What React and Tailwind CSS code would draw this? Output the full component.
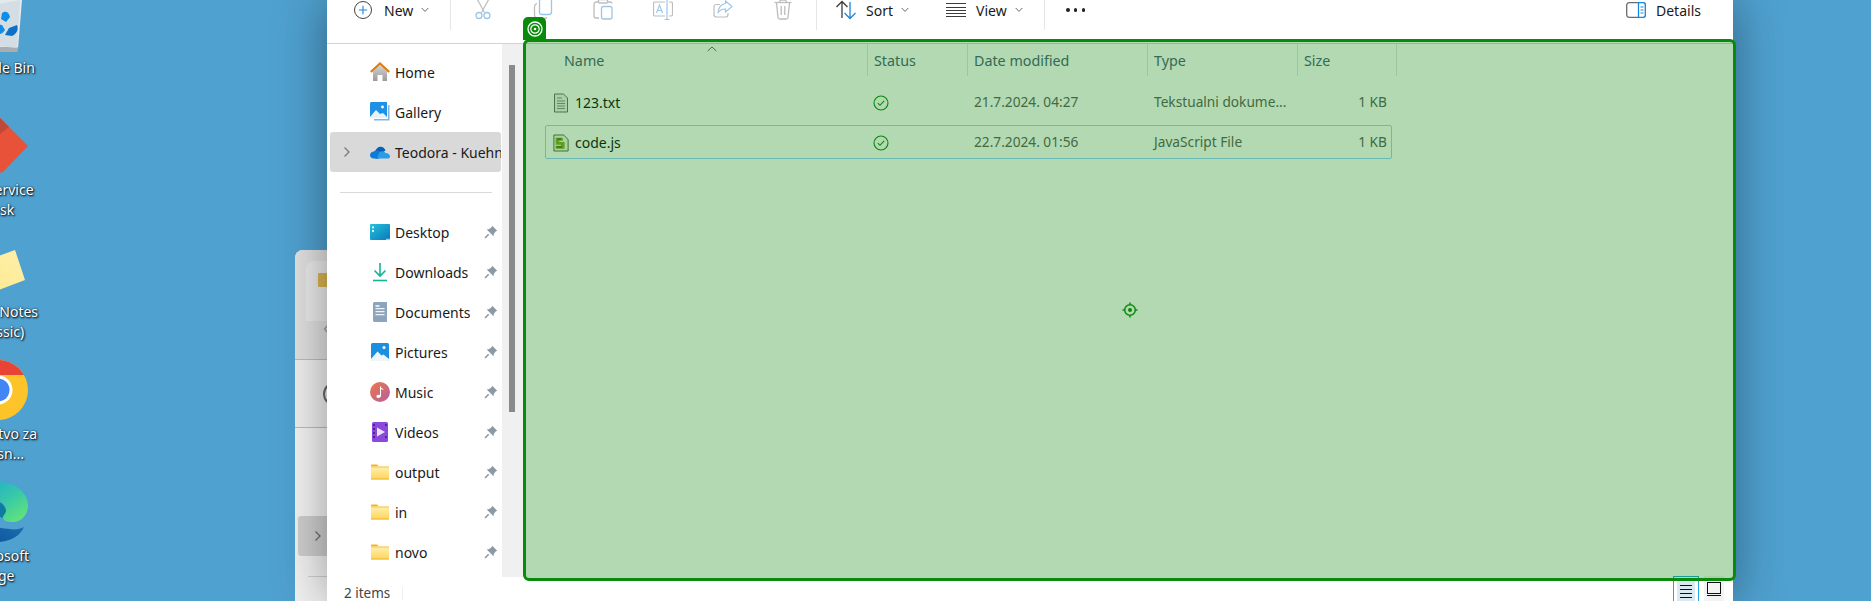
import React from "react";

const Chevron = ({ cls = "text-[#6a6a6a]" }) => (
  <svg width="8" height="6" viewBox="0 0 8 6" className={cls}><path d="M.7 1 4 4.4 7.3 1" fill="none" stroke="currentColor" strokeWidth="1" /></svg>
);

const Bin = () => (
  <svg width="60" height="60" viewBox="0 0 60 60">
    <path d="M12 6H54L50 55H16Z" fill="#e3eaee" />
    <path d="M16 55H50L49.5 60H17Z" fill="#a9aeb2" transform="translate(0 -2)" />
    <path d="M30 10 52 6l-3 48-20-2z" fill="#d4dde3" />
    <path d="M34 19c5-3 7 0 8 4l-4 5-5-3zM28 30l6 1 3 5c-2 4-8 6-11 3s-1-6 2-9z" fill="#0f8de8" />
    <path d="M41 34l8-3c2 5-1 9-5 11l-7-1z" fill="#0c72c8" />
  </svg>
);

const Diamond = () => (
  <svg width="60" height="60" viewBox="0 0 60 60">
    <path d="M32 2 60 30 36 55c-2 2-5 2-7 0L6 32c-2-2-2-5 0-7L26 3c2-2 4-2 6-1z" fill="#e85239" />
    <path d="M32 2 41 11 30 20 22 15 26 3c2-2 4-2 6-1z" fill="#c04a36" />
  </svg>
);

const Note = () => (
  <svg width="60" height="60" viewBox="0 0 60 60">
    <defs><linearGradient id="nt" x1="0" y1="1" x2="1" y2="0"><stop offset="0" stopColor="#ffe88a" /><stop offset="1" stopColor="#fdf0ab" /></linearGradient></defs>
    <path d="M8 26 47 12 57 42 20 56Z" fill="url(#nt)" />
    <path d="M8 26 30 18 32 14 20 14Z" fill="#a9d9d0" />
  </svg>
);

const Chrome = () => (
  <svg width="60" height="60" viewBox="0 0 60 60">
    <defs><clipPath id="cc"><circle cx="30" cy="30" r="30" /></clipPath></defs>
    <g clipPath="url(#cc)">
      <rect width="60" height="60" fill="#fdc42a" />
      <path d="M0 0H60V15H30L8 34 0 30Z" fill="#e94335" />
      <path d="M0 30 17 36 30 40 27 60H0Z" fill="#2f9e4f" />
    </g>
    <circle cx="30" cy="30" r="14.5" fill="#fff" />
    <circle cx="30" cy="30" r="11.5" fill="#4285f4" />
  </svg>
);

const Edge = () => (
  <svg width="60" height="60" viewBox="0 0 60 60">
    <defs>
      <linearGradient id="eg" x1="0" y1="0" x2="1" y2="1"><stop offset="0" stopColor="#1ba3d8" /><stop offset=".55" stopColor="#38c9a8" /><stop offset="1" stopColor="#6dea6f" /></linearGradient>
      <linearGradient id="eb" x1="1" y1="0" x2="0" y2="1"><stop offset="0" stopColor="#1f79b5" /><stop offset="1" stopColor="#0c4b9a" /></linearGradient>
    </defs>
    <path d="M3 28C5 10 18 0 32 0c16 0 28 12 28 23 0 10-7 17-15 17-6 0-9-1-10-4-1-2 3-4 3-8 0-6-6-11-14-9C15 21 8 23 3 28z" fill="url(#eg)" />
    <path d="M20 20c9-3 16 1 18 8 0 4-4 6-3 8l-9-3-5-6z" fill="#0e7c9f" />
    <path d="M0 32c0 16 13 28 29 28 13 0 23-6 27-15-4 2-9 3-14 2-12 0-20-4-24-12C14 31 6 29 0 32z" fill="url(#eb)" />
  </svg>
);

const desktopItems = [
  { icon: <Bin />, text: "Recycle Bin" },
  { icon: <Diamond />, text: "Jira Service Desk" },
  { icon: <Note />, text: "Sticky Notes (Classic)" },
  { icon: <Chrome />, text: "Uputstvo za korisn..." },
  { icon: <Edge />, text: "Microsoft Edge" },
];

const Home = () => (
  <svg width="20" height="20" viewBox="0 0 20 20">
    <defs><linearGradient id="hm" x1="0" y1="0" x2="0" y2="1"><stop offset="0" stopColor="#d5d5d5" /><stop offset="1" stopColor="#9a9a9a" /></linearGradient></defs>
    <path d="M3 9 10 3l7 6v10h-4.500v-6h-5v6H3z" fill="url(#hm)" />
    <path d="M.7 10 10 1.500l9.300 8.500" fill="none" stroke="#e07b10" strokeWidth="2.200" />
  </svg>
);
const Gallery = () => (
  <svg width="20" height="20" viewBox="0 0 20 20">
    <path d="M18 3h1.500v15.500H4V17h14z" fill="#7fb5e0" />
    <path d="M0 1.500C0 .7.700 0 1.500 0H17v15H0z" fill="#1d92e4" />
    <circle cx="12.500" cy="5" r="1.400" fill="#fff" />
    <path d="M0 15 6 8l4 4 3-1 4 4v1H0z" fill="#e8f2fb" />
  </svg>
);
const OneDrive = () => (
  <svg width="20" height="14" viewBox="0 0 20 14">
    <path d="M5 7c1-4 4-6 7-5 2 .5 3 2 3.500 3.500L10 9z" fill="#0a5fb8" />
    <path d="M4 13.500C1.500 13.500 0 12 0 10c0-2 2-3.500 4-3.500.500-1 3-1.500 5-.500l3 3 2-1 2 1-8 5z" fill="#0f7bd6" />
    <path d="M7 13.500h11c1.500 0 2-1 2-2 0-2-2-3.500-4.500-3.500-1-1-3-2.500-6-1z" fill="#2a9ce8" />
  </svg>
);
const DesktopI = () => (
  <svg width="20" height="20" viewBox="0 0 20 20">
    <defs><linearGradient id="dk" x1="0" y1="0" x2="1" y2="1"><stop offset="0" stopColor="#22c3dd" /><stop offset="1" stopColor="#0c78b8" /></linearGradient></defs>
    <rect y="2" width="20" height="16" rx="1" fill="url(#dk)" />
    <rect x="2" y="4.500" width="2" height="1.800" fill="#fff" />
    <rect x="2" y="8" width="2" height="1.800" fill="#fff" />
    <rect x="16" y="16.800" width="4" height="1" fill="#cde" />
  </svg>
);
const DownloadI = () => (
  <svg width="20" height="20" viewBox="0 0 20 20" fill="none" stroke="#14b39a" strokeWidth="1.600">
    <path d="M10 1v12.500M4.500 8.500 10 14l5.500-5.500" />
    <path d="M3 18.500h14" />
  </svg>
);
const DocumentI = () => (
  <svg width="20" height="20" viewBox="0 0 20 20">
    <path d="M3 1.500c0-.8.700-1.500 1.500-1.500H17v20H4.500C3.700 20 3 19.300 3 18.500z" fill="#8ea4bd" />
    <path d="M5.500 6h9v1.200h-9zM5.500 9h9v1.200h-9zM5.500 12h9v1.200h-9z" fill="#eef3f8" />
    <rect x="5.500" y="3" width="4" height="2" fill="#dfe7f0" />
  </svg>
);
const PicturesI = () => (
  <svg width="20" height="20" viewBox="0 0 20 20">
    <rect x="1" y="1" width="18" height="18" rx="1.500" fill="#1c8fe0" />
    <circle cx="14" cy="5.500" r="1.500" fill="#fff" />
    <path d="M1 17 7.500 9.500l4 4 2-1L19 17v1c0 .6-.4 1-1 1H2c-.6 0-1-.4-1-1z" fill="#eef6fc" />
  </svg>
);
const MusicI = () => (
  <svg width="20" height="20" viewBox="0 0 20 20">
    <defs><linearGradient id="ms" x1="0" y1="0" x2="1" y2="1"><stop offset="0" stopColor="#f0774a" /><stop offset="1" stopColor="#b1609e" /></linearGradient></defs>
    <circle cx="10" cy="10" r="10" fill="url(#ms)" />
    <path d="M10 4.500h1v1c0 1 2.500 1 2.500 2.500l-2.500-1v6.500c0 1.500-1.200 2.500-2.500 2.500S6 15 6.500 14c.5-1.200 2-1.500 3.500-1z" fill="#fff" />
  </svg>
);
const VideosI = () => (
  <svg width="20" height="20" viewBox="0 0 20 20">
    <rect x="2" y="0" width="16" height="20" rx="1.500" fill="#8a48dc" />
    <path d="M7 5.500 15 10l-8 4.500z" fill="#ece0fb" />
    <path d="M3.300 2h1.500v2H3.300zM3.300 6h1.500v2H3.300zM3.300 10h1.500v2H3.300zM3.300 14h1.500v2H3.300zM15.200 2h1.500v2h-1.500zM15.200 14h1.500v2h-1.500z" fill="#3c1d80" />
  </svg>
);
const FolderI = () => (
  <svg width="20" height="20" viewBox="0 0 20 20">
    <defs><linearGradient id="fd" x1="0" y1="0" x2="0" y2="1"><stop offset="0" stopColor="#fff0b0" /><stop offset="1" stopColor="#fdd45a" /></linearGradient></defs>
    <path d="M1 3.500C1 3 1.400 2.500 2 2.500h5l2 2H1z" fill="#f5b21d" />
    <rect x="1" y="4.500" width="18" height="13" fill="url(#fd)" />
    <rect x="1" y="16.500" width="18" height="1" fill="#f2b733" />
    <rect x="1" y="4.500" width="18" height="1" fill="#f5c344" />
  </svg>
);
const Pin = () => (
  <svg width="14" height="14" viewBox="0 0 14 14">
    <path d="M8.300.8 13.200 5.700 11.700 6.500 9.900 8.700 9.500 11.300 2.700 4.500 5.300 4.100 7.500 2.300z" fill="#8d9aa5" />
    <path d="M4.700 9.300 1 13" stroke="#8d9aa5" strokeWidth="1.600" />
  </svg>
);

const navTop = [
  { icon: <Home />, text: "Home" },
  { icon: <Gallery />, text: "Gallery" },
];
const navPinned = [
  { icon: <DesktopI />, text: "Desktop" },
  { icon: <DownloadI />, text: "Downloads" },
  { icon: <DocumentI />, text: "Documents" },
  { icon: <PicturesI />, text: "Pictures" },
  { icon: <MusicI />, text: "Music" },
  { icon: <VideosI />, text: "Videos" },
  { icon: <FolderI />, text: "output" },
  { icon: <FolderI />, text: "in" },
  { icon: <FolderI />, text: "novo" },
];

const NavRow = ({ icon, text, pin }) => (
  <div className="h-10 flex items-center pl-[43px] relative">
    <span className="w-5 h-5 shrink-0 flex items-center justify-center">{icon}</span>
    <span className="ml-[5px] text-[14px] text-[#1a1a1a] whitespace-nowrap">{text}</span>
    {pin && <span className="ml-auto mr-[4px] flex"><Pin /></span>}
  </div>
);

const CutI = () => (
  <svg width="20" height="20" viewBox="0 0 20 20" fill="none">
    <path d="M3 -3 11.500 12.500M17 -3 8.500 12.500" stroke="#bdbdbd" strokeWidth="1.200" />
    <circle cx="6" cy="15.500" r="3" stroke="#9cc6e8" strokeWidth="1.300" />
    <circle cx="14" cy="15.500" r="3" stroke="#9cc6e8" strokeWidth="1.300" />
  </svg>
);
const CopyI = () => (
  <svg width="20" height="20" viewBox="0 0 20 20" fill="none">
    <rect x="6.500" y="-1.500" width="12" height="16" rx="2.500" stroke="#9cc6e8" strokeWidth="1.300" />
    <path d="M4 3.500c-1.500 .5-2.500 1.500-2.500 3v8c0 2 1.500 4 4 4h6c1 0 2-.5 2.500-1" stroke="#bdbdbd" strokeWidth="1.300" />
  </svg>
);
const PasteI = () => (
  <svg width="20" height="20" viewBox="0 0 20 20" fill="none">
    <path d="M5 2H3C2 2 1 3 1 4v12c0 1 1 2 2 2h3M15 2h2c1 0 2 .5 2 1.500" stroke="#bdbdbd" strokeWidth="1.300" />
    <rect x="5.500" y="-.5" width="9" height="3.500" rx="1" stroke="#bdbdbd" strokeWidth="1.300" />
    <rect x="8.500" y="6.500" width="10.500" height="12.500" rx="2" stroke="#9cc6e8" strokeWidth="1.300" />
  </svg>
);
const RenameI = () => (
  <svg width="20" height="20" viewBox="0 0 20 20" fill="none">
    <path d="M12 2H2C1 2 .5 3 .5 3.500v11c0 1 .5 1.500 1.500 1.500h10M16 2h2c1 0 1.500 1 1.500 1.500v11c0 1-.5 1.500-1.500 1.500h-2" stroke="#bdbdbd" strokeWidth="1.200" />
    <path d="M14 -1v20M11.500 -1.500h5M11.500 19.500h5" stroke="#9cc6e8" strokeWidth="1.200" />
    <path d="M3.500 13 6.500 5 9.500 13M4.500 10.500h4" stroke="#9cc6e8" strokeWidth="1.100" />
  </svg>
);
const ShareI = () => (
  <svg width="20" height="20" viewBox="0 0 20 20" fill="none">
    <path d="M7 4.500H3C2 4.500 1 5.500 1 6.500v8c0 1.500 1 2.500 2.500 2.500h9c1.500 0 2.500-1 2.500-2.500V13" stroke="#bdbdbd" strokeWidth="1.200" />
    <path d="M12.500 1 19 6.500 12.500 12V9C9 9 6.500 10 5 13c0-5 3-9 7.500-9.500z" stroke="#9cc6e8" strokeWidth="1.200" />
  </svg>
);
const TrashI = () => (
  <svg width="20" height="20" viewBox="0 0 20 20" fill="none" stroke="#bdbdbd" strokeWidth="1.300">
    <path d="M.5 2.500h17" transform="translate(1 0)" />
    <path d="M3.500 3 5 17.500c0 1 1 1.500 2 1.500h6c1 0 2-.5 2-1.500L16.500 3" />
    <path d="M8.200 6v9M11.800 6v9" />
    <path d="M7 2V0h6v2" />
  </svg>
);
const SortI = () => (
  <svg width="20" height="20" viewBox="0 0 20 20" fill="none" strokeWidth="1.300">
    <path d="M6 18V1.500M.5 7 6 1.500 11.500 7" stroke="#3c3c3c" />
    <path d="M14 2v16.500M8.500 13 14 18.500 19.500 13" stroke="#1a86de" />
  </svg>
);
const ViewI = () => (
  <svg width="20" height="20" viewBox="0 0 20 20" stroke="#3c3c3c" strokeWidth="1">
    <path d="M0 3.500h20M0 7.500h20M0 10.500h20M0 13.500h20M0 16.500h20" />
  </svg>
);
const DetailsI = () => (
  <svg width="20" height="16" viewBox="0 0 20 16" fill="none">
    <rect x=".7" y=".7" width="18.600" height="14.600" rx="2.500" stroke="#6b6b6b" strokeWidth="1.300" />
    <path d="M12.500 .7H17c1.300 0 2.300 1 2.300 2.300v10c0 1.300-1 2.300-2.300 2.300h-4.500z" fill="#fff" stroke="#1a86de" strokeWidth="1.300" />
    <path d="M14.500 5h3M14.500 8h3M14.500 11h3" stroke="#1a86de" strokeWidth="1.200" />
  </svg>
);

const Tool = ({ children }) => <span className="w-[60px] h-5 flex justify-center shrink-0">{children}</span>;
const Sep = ({ cls }) => <span className={`block w-px h-[30px] bg-[#e6e6e6] shrink-0 ${cls}`} />;
const Label = ({ w, children }) => <span className={`h-5 flex items-center whitespace-nowrap text-[14px] text-[#1a1a1a] ${w}`}>{children}</span>;

const TxtFile = () => (
  <svg width="16" height="20" viewBox="0 0 16 20" fill="none">
    <path d="M1.500 1h9l4 4v14h-13z" fill="#f3f3f3" stroke="#6d6d6d" />
    <path d="M4 5h5M4 8h8M4 10.500h8M4 13h8M4 15.500h8" stroke="#8c8c8c" />
  </svg>
);
const JsFile = () => (
  <svg width="18" height="20" viewBox="0 0 18 20">
    <path d="M1 1h11l5 5v13H1z" fill="#f4f6ea" stroke="#4a5a3a" />
    <path d="M3 4h8v3.500H7V9h6v7.500H3V13h6v-1H3z" fill="#8aa82c" />
    <path d="M4 14.500h6" stroke="#2c4a1c" strokeWidth="1" />
    <path d="M5 5.500h4" stroke="#2c4a1c" strokeWidth="1" />
  </svg>
);
const CheckI = () => (
  <svg width="16" height="16" viewBox="0 0 16 16" fill="none" stroke="#108a10" strokeWidth="1.100">
    <circle cx="8" cy="8" r="7" />
    <path d="M4.800 8.200 7 10.300 11.200 5.900" />
  </svg>
);

const Target = () => (
  <svg width="16" height="16" viewBox="0 0 16 16" fill="none" stroke="#0a8a0a">
    <circle cx="8" cy="8" r="5.300" strokeWidth="1.500" />
    <circle cx="8" cy="8" r="2" fill="#0a8a0a" stroke="none" />
    <path d="M8 .5V2.500M8 13.500v2M.5 8h2M13.500 8h2" strokeWidth="1.500" />
  </svg>
);
const TagI = () => (
  <svg width="16" height="16" viewBox="0 0 16 16" fill="none" stroke="#fff">
    <circle cx="8" cy="8" r="7" strokeWidth="1.300" />
    <circle cx="8" cy="8" r="4.200" strokeWidth="1.200" />
    <circle cx="8" cy="8" r="1.300" fill="#fff" stroke="none" />
  </svg>
);

const files = [
  { icon: <TxtFile />, name: "123.txt", date: "21.7.2024. 04:27", type: "Tekstualni dokume...", selected: false },
  { icon: <JsFile />, name: "code.js", date: "22.7.2024. 01:56", type: "JavaScript File", selected: true },
];

export default function App() {
  return (
    <div className="w-[1871px] h-[601px] overflow-hidden flex relative bg-[#4fa1d0] font-['Noto_Sans',sans-serif]">
      {/* desktop icons */}
      <div className="absolute left-[-47px] top-[-6px] w-[90px] flex flex-col gap-[18px]">
        {desktopItems.map((d) => (
          <div key={d.text} className="h-[104px] flex flex-col items-center gap-1">
            <div className="w-[60px] h-[60px] shrink-0">{d.icon}</div>
            <div className="w-[90px] text-center text-white text-[14px] leading-5 [text-shadow:1px_1px_2px_#000,0_0_2px_#123]">{d.text}</div>
          </div>
        ))}
      </div>

      {/* back window */}
      <div className="absolute left-[295px] top-[250px] w-[60px] h-[360px] rounded-tl-[8px] bg-[#f2f2f2] flex flex-col overflow-hidden">
        <div className="h-[110px] bg-[#e2e2e2] border-b border-[#bdbdbd] pt-[11px]">
          <div className="ml-[11px] h-[60px] rounded-tl-[8px] bg-[#ececec] pl-3 pt-3">
            <div className="w-4 h-[14px] bg-[#dcb452] rounded-[1px]" />
          </div>
          <svg className="ml-7 mt-[2px]" width="10" height="12" viewBox="0 0 10 12" fill="none" stroke="#a0a0a0" strokeWidth="1.400"><path d="M6 1 1.500 6 6 11" /></svg>
        </div>
        <div className="h-[68px] bg-[#f0f0f0] border-b border-[#bdbdbd] pl-7 pt-[22px]">
          <div className="w-6 h-6 rounded-full border-2 border-[#6a6a6a]" />
        </div>
        <div className="h-[88px] bg-[#f4f4f4]" />
        <div className="h-10 ml-[3px] rounded-[3px] bg-[#cfcfcf] pl-4 flex items-center">
          <svg width="8" height="12" viewBox="0 0 8 12" fill="none" stroke="#6e6e6e" strokeWidth="1.300"><path d="M1.500 1.500 6 6l-4.500 4.500" /></svg>
        </div>
        <div className="h-px ml-[13px] mt-5 bg-[#cfcfcf]" />
      </div>

      {/* spacer left of the explorer */}
      <div className="w-[327px] shrink-0" />

      {/* explorer window */}
      <div className="w-[1406px] h-[601px] shrink-0 bg-white relative flex flex-col shadow-[0_0_48px_rgba(0,0,0,0.4)]">
        {/* toolbar */}
        <div className="h-[44px] shrink-0 border-b border-[#cbd5db] flex items-start pl-[27px]">
          <span className="w-[18px] h-5 flex items-center">
            <svg width="18" height="18" viewBox="0 0 18 18" fill="none"><circle cx="9" cy="9" r="8.500" stroke="#444" /><path d="M9 4.800v8.400M4.800 9h8.400" stroke="#1a86de" strokeWidth="1.100" /></svg>
          </span>
          <Label w="ml-3 w-[34px]">New</Label>
          <span className="ml-[3px] w-2 h-5 flex items-center"><Chevron /></span>
          <Sep cls="ml-[21px]" />
          <span className="ml-[2px] flex">
            <Tool><CutI /></Tool>
            <Tool><CopyI /></Tool>
            <Tool><PasteI /></Tool>
            <Tool><RenameI /></Tool>
            <Tool><ShareI /></Tool>
            <Tool><TrashI /></Tool>
          </span>
          <Sep cls="ml-[3px]" />
          <span className="ml-[19px] w-5 h-5"><SortI /></span>
          <Label w="ml-[10px] w-[27px]">Sort</Label>
          <span className="ml-2 w-2 h-5 flex items-center"><Chevron /></span>
          <span className="ml-[37px] w-5 h-5"><ViewI /></span>
          <Label w="ml-[10px] w-[31px]">View</Label>
          <span className="ml-2 w-2 h-5 flex items-center"><Chevron /></span>
          <Sep cls="ml-[21px]" />
          <span className="ml-[21px] w-[19px] h-5 flex items-center justify-between">
            <span className="w-[3.500px] h-[3.500px] rounded-full bg-[#222]" />
            <span className="w-[3.500px] h-[3.500px] rounded-full bg-[#222]" />
            <span className="w-[3.500px] h-[3.500px] rounded-full bg-[#222]" />
          </span>
          <span className="ml-auto w-5 h-5 flex items-center"><DetailsI /></span>
          <Label w="ml-[10px] w-[44px] mr-[33px]">Details</Label>
        </div>

        {/* main */}
        <div className="h-[533px] shrink-0 flex">
          {/* nav */}
          <div className="w-[175px] shrink-0 overflow-hidden pt-[8px]">
            {navTop.map((n) => <NavRow key={n.text} {...n} />)}
            <div className="h-10 mx-[3px] mr-[1px] rounded-[3px] bg-[#d9d9d9] flex items-center overflow-hidden">
              <span className="ml-[13px] w-[8px] flex">
                <svg width="8" height="12" viewBox="0 0 8 12" fill="none" stroke="#7a7a7a" strokeWidth="1.300"><path d="M1.500 1.500 6 6l-4.500 4.500" /></svg>
              </span>
              <span className="ml-[19px] w-5 flex"><OneDrive /></span>
              <span className="ml-[5px] text-[14px] text-[#1a1a1a] whitespace-nowrap">Teodora - Kuehne+Nagel</span>
            </div>
            <div className="h-px mx-[13px] mr-[10px] mt-[20px] mb-[19px] bg-[#d9d9d9]" />
            {navPinned.map((n) => <NavRow key={n.text} {...n} pin />)}
          </div>
          {/* scrollbar */}
          <div className="w-[21px] shrink-0 bg-[#f0f0f0] pl-[7px] pt-[21px]">
            <div className="w-[6px] h-[347px] bg-[#8a8a8a]" />
          </div>
          {/* list */}
          <div className="flex-1 pl-[22px]">
            <div className="grid grid-cols-[322px_100px_180px_150px_100px] h-[32px] w-[852px] text-[14.300px] text-[#4c607a]">
              <div className="relative pl-[19px] pt-[1px] flex items-center">
                Name
                <svg className="absolute left-[162px] top-[2px]" width="10" height="6" viewBox="0 0 10 6" fill="none" stroke="#5a6a6a"><path d="M.7 5 5 1l4.300 4" /></svg>
              </div>
              <div className="border-l border-[#e3e3e3] pl-[6px] pt-[1px] flex items-center">Status</div>
              <div className="border-l border-[#e3e3e3] pl-[6px] pt-[1px] flex items-center">Date modified</div>
              <div className="border-l border-[#e3e3e3] pl-[6px] pt-[1px] flex items-center">Type</div>
              <div className="border-x border-[#e3e3e3] pl-[6px] pt-[1px] flex items-center">Size</div>
            </div>
            <div className="mt-[9px] flex flex-col gap-[6px]">
              {files.map((f) => (
                <div key={f.name} className={`grid grid-cols-[322px_100px_180px_150px_95px] w-[847px] h-[34px] pt-[1px] items-center border rounded-[2px] text-[13.700px] text-[#5f5f5f] ${f.selected ? "border-[#99d1ff]" : "border-transparent"}`}>
                  <div className="pl-[7px] flex items-center gap-[6px] text-[14px] text-[#111]">
                    <span className="w-4 flex justify-center">{f.icon}</span>
                    <span>{f.name}</span>
                  </div>
                  <div className="pl-[5px] flex"><CheckI /></div>
                  <div className="pl-[6px]">{f.date}</div>
                  <div className="pl-[6px] whitespace-nowrap">{f.type}</div>
                  <div className="text-right pr-[6px]">1 KB</div>
                </div>
              ))}
            </div>
          </div>
        </div>

        {/* status bar */}
        <div className="flex-1 flex items-center pl-[17px] relative">
          <span className="text-[13.500px] text-[#444] mt-[6px]">2 items</span>
          <span className="ml-3 mt-[6px] w-px h-[13px] bg-[#eeeeee]" />
          <div className="ml-auto mr-[9px] self-stretch flex items-start gap-[5px] -mt-[1px]">
            <div className="w-[26px] h-[26px] border border-[#2aa5d8] border-b-0 px-[3px] pt-[3px]">
              <div className="h-full bg-[#dbe9f3] flex flex-col gap-[3px] px-[3px] pt-[5px]">
                <span className="h-px bg-[#111]" />
                <span className="h-px bg-[#111]" />
                <span className="h-px bg-[#111]" />
                <span className="h-px bg-[#111]" />
              </div>
            </div>
            <div className="w-5 h-[26px] bg-[#f3f3f3] px-[3px] pt-[6px] flex flex-col gap-[1px]">
              <span className="h-[12px] border border-[#111]" />
              <span className="h-px bg-[#111]" />
            </div>
          </div>
        </div>

        {/* green highlight overlay */}
        <div className="absolute left-[196px] right-[-3px] top-[39px] bottom-[20px] border-[3px] border-[#0a8a0a] rounded-[6px] bg-[rgba(0,128,0,0.3)] flex items-center justify-center">
          <Target />
          <div className="absolute left-[-3px] top-[-25px] w-[23px] h-[23px] bg-[#0a8a0a] rounded-t-[5px] flex items-center justify-center"><TagI /></div>
        </div>
      </div>
    </div>
  );
}
